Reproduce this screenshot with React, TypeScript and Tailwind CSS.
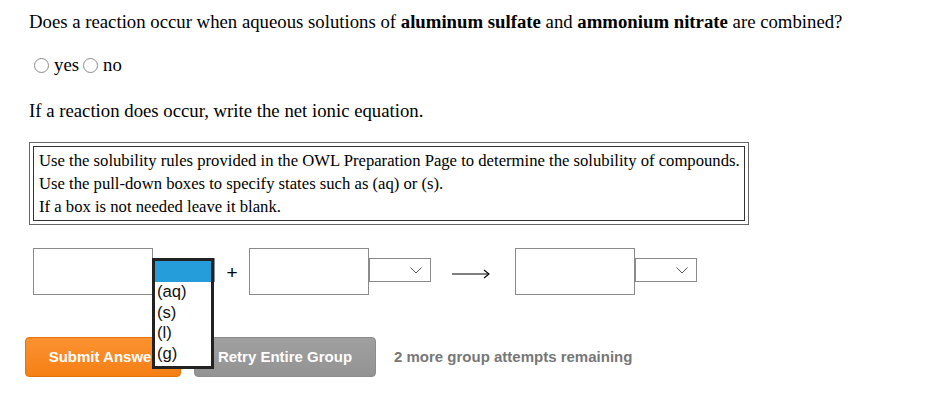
import React from "react";

function Chevron() {
  return (
    <svg width="12" height="7" viewBox="0 0 12 7" className="absolute right-[8px] top-[8px]">
      <path d="M0.5 0.5 L6 6 L11.5 0.5" fill="none" stroke="#555" strokeWidth="1" />
    </svg>
  );
}

function Select() {
  return (
    <div className="relative mt-[10px] h-[24px] w-[62px] border border-[#8a8a8a] bg-white">
      <Chevron />
    </div>
  );
}

function Input() {
  return <div className="h-[47px] w-[120px] border border-[#8a8a8a] bg-white" />;
}

function Radio({ label }: { label: string }) {
  return (
    <span className="flex items-center">
      <span className="mr-[5px] inline-block h-[15px] w-[15px] rounded-full border border-[#8a8a8a] bg-white" />
      <span>{label}</span>
    </span>
  );
}

export default function App() {
  return (
    <div className="relative h-[418px] w-[932px] overflow-hidden bg-white text-black" style={{ fontFamily: '"Liberation Serif", "Times New Roman", serif' }}>
      <div className="pl-[29px] pt-[11px]">
        <p className="text-[18.75px] leading-[22px]">
          Does a reaction occur when aqueous solutions of <b>aluminum sulfate</b> and <b>ammonium nitrate</b> are combined?
        </p>
        <div className="mt-[21px] flex items-center gap-[4px] pl-[5px] text-[18.75px] leading-[22px]">
          <Radio label="yes" />
          <Radio label="no" />
        </div>
        <p className="mt-[24px] text-[18.75px] leading-[22px]">If a reaction does occur, write the net ionic equation.</p>
        <div className="mt-[20px] w-[720px] border border-[#666] p-[3px]">
          <div className="whitespace-nowrap border border-[#333] px-[5px] pb-[2px] pt-[2px] text-[16.67px] leading-[23px]">
            <div>Use the solubility rules provided in the OWL Preparation Page to determine the solubility of compounds.</div>
            <div>Use the pull-down boxes to specify states such as (aq) or (s).</div>
            <div>If a box is not needed leave it blank.</div>
          </div>
        </div>
        <div className="mt-[23px] flex items-start pl-[4px]">
          <Input />
          <Select />
          <div className="mt-[14px] w-[34px] text-center text-[19px] leading-[22px]" style={{ fontFamily: '"Liberation Sans", Arial, sans-serif' }}>+</div>
          <Input />
          <Select />
          <div className="mt-[21px] flex w-[84px] justify-center pr-[4px]">
            <svg width="38" height="10" viewBox="0 0 38 10">
              <path d="M0 5 H36.5" stroke="#000" strokeWidth="1.2" />
              <path d="M32 1 L37 5 L32 9" fill="none" stroke="#000" strokeWidth="1.1" />
            </svg>
          </div>
          <Input />
          <Select />
        </div>
      </div>
      <div className="mt-[42px] flex items-center pl-[25px]" style={{ fontFamily: '"Liberation Sans", Arial, sans-serif' }}>
        <button className="h-[40px] w-[156px] rounded-[4px] border border-[#e5730c] bg-gradient-to-b from-[#fb9330] to-[#f57f12] text-[15px] font-bold text-white">
          Submit Answer
        </button>
        <button className="ml-[13px] h-[40px] w-[182px] rounded-[4px] border border-[#8c8c8c] bg-gradient-to-b from-[#a0a0a0] to-[#939393] text-[15px] font-bold text-white">
          Retry Entire Group
        </button>
        <span className="ml-[18px] text-[15px] font-bold text-[#777]">2 more group attempts remaining</span>
      </div>
      <div className="absolute left-[152px] top-[258px] h-[111px] w-[62px] border-[3px] border-[#222] bg-white text-[16.67px] leading-[20.7px] text-[#111]" style={{ fontFamily: '"Liberation Sans", Arial, sans-serif' }}>
        <div className="h-[21px] bg-[#269ddb]" />
        <div className="pl-[2px]">(aq)</div>
        <div className="pl-[2px]">(s)</div>
        <div className="pl-[2px]">(l)</div>
        <div className="pl-[2px]">(g)</div>
      </div>
    </div>
  );
}
